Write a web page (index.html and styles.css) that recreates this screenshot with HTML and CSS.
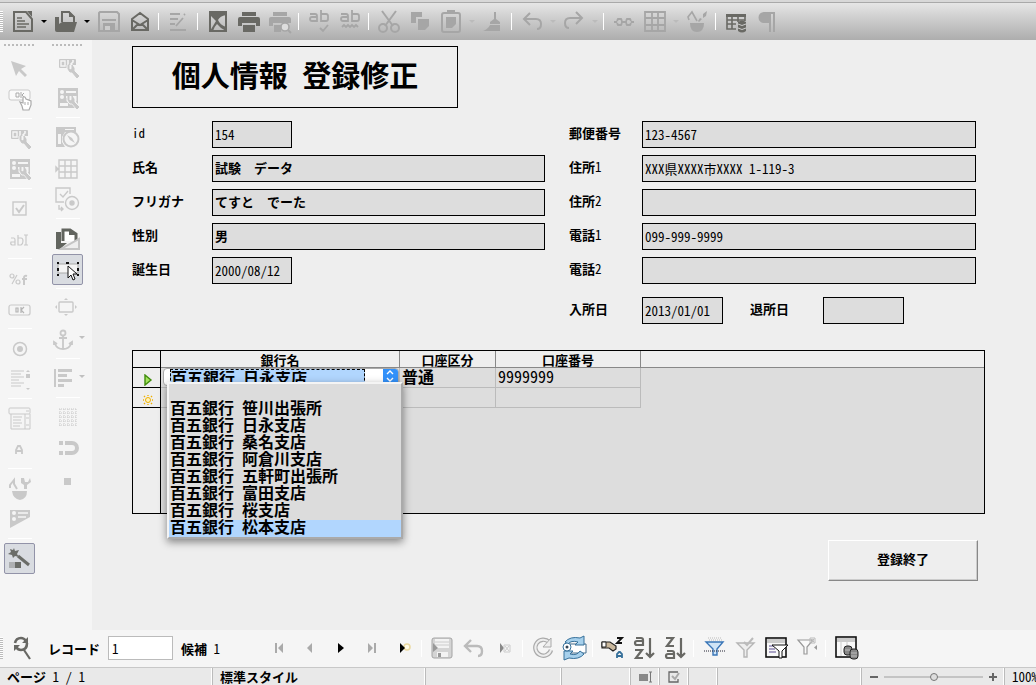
FILE: index.html
```html
<!DOCTYPE html>
<html lang="ja">
<head>
<meta charset="utf-8">
<meta name="viewport" content="width=device-width, initial-scale=1">
<title>個人情報 登録修正</title>
<link rel="stylesheet" href="styles.css">
</head>
<body>
<svg class="defs" aria-hidden="true">
  <symbol id="wrench" viewBox="0 0 24 24"><path d="M13 9v4l2 2h2l5 6M18 9v4l-2 3" fill="none" stroke="#f5f5f5" stroke-width="5"/><path d="M12 9v4l2 3h2l5 6 2-2-5-5v-3l-2-3v4l-2 1-1-1V9z" fill="currentColor" stroke="currentColor"/></symbol>
  <symbol id="control" viewBox="0 0 24 24"><rect x="3" y="3" width="17" height="9" rx="1" fill="currentColor"/><path d="M5 5h4v5H5z" fill="none" stroke="#f5f5f5" stroke-width="1.4"/><path d="M12 4v7M17 4v2l-2 2 2 2v1" fill="none" stroke="#f5f5f5" stroke-width="1.6"/><use href="#wrench"/></symbol>
  <symbol id="formprops" viewBox="0 0 24 24"><path d="M2 1h20v20H2z" fill="currentColor"/><path d="M10 4h10v2H10zM10 9h10v2H10zM4 16h8v3H4z" fill="#f5f5f5"/><circle cx="6" cy="5" r="2" fill="#f5f5f5"/><circle cx="6" cy="10" r="2" fill="#f5f5f5"/><use href="#wrench"/></symbol>
</svg>
<div class="app">
  <header class="toolbar" role="toolbar" aria-label="標準">
    <span class="grip"></span>
    <button class="tool" aria-label="新規"><svg viewBox="0 0 24 24"><path d="M15 2H3v19h18V9z" fill="none" stroke="currentColor" stroke-width="2"/><path d="M16 1h5v6z" fill="currentColor"/><path d="M6 8h5M6 11h8M6 14h12M6 17h9" stroke="currentColor" stroke-width="1.6"/></svg></button>
    <button class="drop" aria-label="新規メニュー"></button>
    <button class="tool" aria-label="開く"><svg viewBox="0 0 24 24"><path d="M8 12V2h7l5 5v5" fill="none" stroke="currentColor" stroke-width="2"/><path d="M15 1l6 6h-6z" fill="currentColor"/><path d="M1 7h4v7l3-2h15l-3 10H3q-2 0-2-2z" fill="currentColor"/></svg></button>
    <button class="drop" aria-label="開くメニュー"></button>
    <button class="tool" disabled aria-label="保存"><svg viewBox="0 0 24 24"><path d="M3 2h17l2 2v17H2V3z" fill="none" stroke="currentColor" stroke-width="2"/><path d="M5 10h14" stroke="currentColor" stroke-width="2"/><path d="M6 13h12v9H6z" fill="currentColor"/><path d="M8 16h5v4H8z" fill="#ccc"/></svg></button>
    <button class="tool" aria-label="メール"><svg viewBox="0 0 24 24"><path d="M4 9l8-6 8 6v11H4z M4 10l8 5 8-5M4 20l6-6M20 20l-6-6" fill="none" stroke="currentColor" stroke-width="2"/></svg></button>
    <span class="sep"></span>
    <button class="tool" disabled aria-label="編集"><svg viewBox="0 0 24 24"><path d="M3 4h10M3 9h8M3 14h5M3 20h16M9 16l7-8M17 5l1-1" fill="none" stroke="currentColor" stroke-width="1.8"/></svg></button>
    <span class="sep"></span>
    <button class="tool" aria-label="PDF"><svg viewBox="0 0 24 24"><path d="M4 2h16v19H4z" fill="none" stroke="currentColor" stroke-width="2"/><path d="M4 2h16v3q-6 1-8 5 2 5 8 7v4q-5-2-9-7-3 3-4 7H4l6-10-6-6z" fill="currentColor"/></svg></button>
    <button class="tool" aria-label="印刷"><svg viewBox="0 0 24 24"><path d="M5 2h14v4H5zM3 7h18q2 0 2 2v7h-4v-3H5v3H1V9q0-2 2-2zM6 15h12v7H6z" fill="currentColor"/></svg></button>
    <button class="tool" disabled aria-label="プレビュー"><svg viewBox="0 0 24 24"><path d="M5 2h14v4H5zM3 7h18q2 0 2 2v4H5v3H1V9q0-2 2-2zM6 15h7v7H6z" fill="currentColor"/><circle cx="17" cy="17" r="4" fill="#ddd" stroke="currentColor" stroke-width="1.6"/><path d="M20 20l3 3" stroke="currentColor" stroke-width="2"/></svg></button>
    <span class="sep"></span>
    <button class="tool" disabled aria-label="スペルチェック"><svg viewBox="0 0 24 24" fill="none" stroke="currentColor" stroke-width="1.8"><path d="M3 4h5q2 0 2 2v5H5q-2 0-2-2t2-2h5M14 0v11h5q2 0 2-2V6q0-2-2-2h-5M13 18l3 3 5-6"/></svg></button>
    <button class="tool" disabled aria-label="自動スペルチェック"><svg viewBox="0 0 24 24" fill="none" stroke="currentColor" stroke-width="1.8"><path d="M3 4h5q2 0 2 2v5H5q-2 0-2-2t2-2h5M14 0v11h5q2 0 2-2V6q0-2-2-2h-5M4 17l2-2 2 2 2-2 2 2 2-2 2 2 2-2 2 2"/></svg></button>
    <span class="sep"></span>
    <button class="tool" disabled aria-label="切り取り"><svg viewBox="0 0 24 24" fill="none" stroke="currentColor" stroke-width="2"><path d="M5 1l11 15M19 1L8 16"/><circle cx="6" cy="18" r="4"/><circle cx="18" cy="18" r="4"/></svg></button>
    <button class="tool" disabled aria-label="コピー"><svg viewBox="0 0 24 24" fill="currentColor"><path d="M3 2h11v5H8v6H3zM10 9h11v7l-4 4h-7z"/></svg></button>
    <button class="tool" disabled aria-label="貼り付け"><svg viewBox="0 0 24 24"><rect x="3" y="3" width="18" height="19" rx="2" fill="none" stroke="currentColor" stroke-width="2"/><path d="M8 0h8v4H8zM7 7h10v7l-4 4H7z" fill="currentColor"/></svg></button>
    <button class="drop faint" disabled aria-label="貼り付けメニュー"></button>
    <button class="tool" disabled aria-label="書式コピー"><svg viewBox="0 0 24 24" fill="currentColor"><path d="M13 2h2v7l4 3v2H9v-2l4-3zM9 15h10v6H2q5-2 7-6z"/></svg></button>
    <span class="sep"></span>
    <button class="tool" disabled aria-label="元に戻す"><svg viewBox="0 0 24 24" fill="none" stroke="currentColor" stroke-width="2"><path d="M10 3L4 9l6 6M4 9h12q5 0 5 5t-4 5"/></svg></button>
    <button class="drop faint" disabled aria-label="元に戻すメニュー"></button>
    <button class="tool" disabled aria-label="やり直し"><svg viewBox="0 0 24 24" fill="none" stroke="currentColor" stroke-width="2"><path d="M14 2l6 6-6 6M20 8H8q-5 0-5 5t4 5"/></svg></button>
    <button class="drop faint" disabled aria-label="やり直しメニュー"></button>
    <span class="sep"></span>
    <button class="tool" disabled aria-label="ハイパーリンク"><svg viewBox="0 0 24 24" fill="none" stroke="currentColor" stroke-width="1.8"><path d="M2 12h3M9 12h6M19 12h3M5 11l1-2h3l1 2M5 13l1 2h3l1-2M14 11l1-2h3l1 2M14 13l1 2h3l1-2"/></svg></button>
    <button class="tool" disabled aria-label="表"><svg viewBox="0 0 24 24" fill="none" stroke="currentColor" stroke-width="1.8"><path d="M2 2h20v19H2zM9 2v19M15 2v19M2 8h20M2 15h20"/></svg></button>
    <button class="drop faint" disabled aria-label="表メニュー"></button>
    <button class="tool" disabled aria-label="図形描画"><svg viewBox="0 0 24 24" fill="currentColor"><path d="M5 13h14q0 9-7 9t-7-9zM18 4l4-3-1 5-3 2zM15 8l2 1-3 3-1-1z"/><path d="M4 10L3 7l4-5 5 9" fill="none" stroke="currentColor" stroke-width="1.6"/></svg></button>
    <span class="sep"></span>
    <button class="tool" aria-label="データソース"><svg viewBox="0 0 24 24"><path d="M3 5h18v6M3 5v14h9M8 5v14M14 5v7M3 10h18M3 14h9" fill="none" stroke="currentColor" stroke-width="1.6"/><path d="M2 4h20v3H2z" fill="currentColor"/><path d="M14 12q4-3 8 0v9q-4 3-8 0z" fill="currentColor"/><path d="M14 14q4 3 8 0M14 18q4 3 8 0" fill="none" stroke="#ccc"/></svg></button>
    <button class="tool" disabled aria-label="編集記号"><svg viewBox="0 0 24 24" fill="currentColor"><path d="M9 2h11v20h-2V4h-2v18h-2V13H9a5 5 0 0 1 0-11z"/></svg></button>
  </header>

  <div class="body">
    <aside class="sidebar">
      <div class="rail" role="toolbar" aria-label="フォームコントロール">
        <span class="grip-h"></span>
        <button class="tool" aria-label="選択"><svg viewBox="0 0 24 24"><path d="M3 4l15 5-5 3 6 6-2 2-6-6-3 5z" fill="currentColor"/></svg></button>
        <button class="tool" aria-label="デザインモード"><svg viewBox="0 0 24 24"><rect x="1" y="2" width="21" height="10" rx="2" fill="#fafafa" stroke="currentColor"/><path d="M8 5h3v4H8zM13 4v6M16 5l-2 2 2 2" fill="none" stroke="#aaa"/><path d="M14 18l-2-4 3 1V9q2-1 3 2l5 2v4l-2 5h-6z" fill="#fff" stroke="#aaa" stroke-width="1.2"/><path d="M17 14v3M20 14v3" stroke="#aaa"/></svg></button>
        <span class="line"></span>
        <button class="tool" aria-label="コントロール"><svg viewBox="0 0 24 24"><use href="#control"/></svg></button>
        <button class="tool" aria-label="フォーム"><svg viewBox="0 0 24 24"><use href="#formprops"/></svg></button>
        <span class="line"></span>
        <button class="tool" aria-label="チェックボックス"><svg viewBox="0 0 24 24" fill="none" stroke="currentColor"><rect x="5" y="5" width="13" height="13" stroke-width="1.4"/><path d="M8 11l3 4 5-7" stroke-width="2"/></svg></button>
        <button class="tool" aria-label="テキストボックス"><svg viewBox="0 0 24 24" fill="none" stroke="currentColor" stroke-width="1.2"><path d="M3 10h3q1 0 1 2v5H4q-2-1-1-3h4M10 7v10h3q2-1 2-4t-2-3h-3M16 7h4M18 7v10M16 17h4"/></svg></button>
        <span class="line"></span>
        <button class="tool" aria-label="書式付きフィールド"><svg viewBox="0 0 24 24" fill="none" stroke="currentColor" stroke-width="1.2"><circle cx="4" cy="9" r="2"/><path d="M9 8l-5 9"/><circle cx="10" cy="15" r="2"/><path d="M19 9q-3-1-3 2v7M14 12h5" stroke-width="2"/></svg></button>
        <button class="tool" aria-label="ボタン"><svg viewBox="0 0 24 24" fill="none" stroke="currentColor"><rect x="1" y="7" width="21" height="10" rx="2" stroke-width="1.2"/><path d="M8 10h2v4H8zM13 9v6M16 9l-3 3 3 3" stroke="#b4b4b4" stroke-width="1.2"/></svg></button>
        <span class="line"></span>
        <button class="tool" aria-label="オプションボタン"><svg viewBox="0 0 24 24"><circle cx="12" cy="12" r="6.5" fill="none" stroke="currentColor" stroke-width="1.5"/><circle cx="12" cy="12" r="3" fill="currentColor"/></svg></button>
        <button class="tool" aria-label="リストボックス"><svg viewBox="0 0 24 24"><path d="M3 3h13M3 6h10M3 9h13M3 12h8M3 15h13M3 18h10" stroke="currentColor" stroke-width="1.2"/><path d="M20 2l2 2h-4zM18 6h4v4h-4zM18 20h4l-2 2z" fill="currentColor"/></svg></button>
        <span class="line"></span>
        <button class="tool" aria-label="コンボボックス"><svg viewBox="0 0 24 24" fill="none" stroke="currentColor"><rect x="1" y="1" width="21" height="6" rx="1"/><path d="M3 7v15h19V7M5 10h9M5 13h8M5 16h9M5 19h7M17 7v15M18 11h3M18 18h3M18 4h3"/></svg></button>
        <button class="tool" aria-label="ラベルフィールド"><svg viewBox="0 0 24 24"><path d="M8 16v-4l2-4h2l2 4v4M8 13h6" fill="none" stroke="currentColor" stroke-width="1.8"/></svg></button>
        <span class="line"></span>
        <button class="tool" aria-label="その他のコントロール"><svg viewBox="0 0 24 24" fill="currentColor"><path d="M4 14h15q0 8-7 9-7-1-8-9zM13 1v5l3 2v4h3V8l4-3-1-4-2 4h-3l-1-4z"/><path d="M2 11V8l4-5v4l3 5" fill="none" stroke="currentColor" stroke-width="2"/></svg></button>
        <button class="tool" aria-label="フォームデザイン"><svg viewBox="0 0 24 24"><path d="M2 2h20v7L2 20z" fill="currentColor"/><path d="M10 5h10M10 9h8" fill="none" stroke="#f5f5f5" stroke-width="1.4"/><circle cx="6" cy="5" r="2" fill="#f5f5f5"/><circle cx="6" cy="11" r="2" fill="#f5f5f5"/></svg></button>
        <span class="line"></span>
        <button class="tool on" aria-label="ウィザード" aria-pressed="true"><svg viewBox="0 0 24 24"><path d="M6 1l1 3 4-1-2 4 2 3-4-1-2 2-1-3-4-1 3-2-1-3 3 1z" fill="#6b6d68"/><path d="M10 9l11 9" stroke="#6b6d68" stroke-width="3"/><path d="M1 15h12v6H1z" fill="#aeb0b2"/><path d="M7 15h6v6H7z" fill="#6b6d68"/></svg></button>
      </div>
      <div class="rail second" role="toolbar" aria-label="フォームデザイン">
        <span class="grip-h"></span>
        <button class="tool" aria-label="コントロールのプロパティ"><svg viewBox="0 0 24 24"><use href="#control"/></svg></button>
        <button class="tool" aria-label="フォームのプロパティ"><svg viewBox="0 0 24 24"><use href="#formprops"/></svg></button>
        <span class="line"></span>
        <button class="tool" aria-label="フォームナビゲーター"><svg viewBox="0 0 24 24"><path d="M0 1h20v5H9l-3 5v5l3 5H0z" fill="currentColor"/><path d="M2 8h3v10H2zM9 3h9v1H9z" fill="#f5f5f5"/><circle cx="15" cy="13" r="7.5" fill="#f5f5f5" stroke="currentColor" stroke-width="2"/><path d="M11 9l5 3 3 5-5-3z" fill="currentColor"/></svg></button>
        <button class="tool" aria-label="テーブルコントロール"><svg viewBox="0 0 24 24" fill="none" stroke="currentColor" stroke-width="1.4"><path d="M3 3h18v18H3zM9 3v18M15 3v18M3 9h18M3 15h18M0 10v4l2-2z"/></svg></button>
        <button class="tool" aria-label="コントロールの置換"><svg viewBox="0 0 24 24" fill="none" stroke="currentColor" stroke-width="1.4"><path d="M8 14H0V0h14v6M4 6l3 3 5-6M3 17v4h4M5 19l2 2-2 2"/><circle cx="16" cy="15" r="6.5"/><circle cx="16" cy="15" r="2" fill="currentColor"/></svg></button>
        <span class="line"></span>
        <button class="tool dark" aria-label="デザインモードで開く"><svg viewBox="0 0 24 24"><path d="M7 14V3h7l6 4v7" fill="#fff" stroke="currentColor" stroke-width="3"/><path d="M13 2l7 6h-7zM0 5h5v11h6l-7 6H0z" fill="currentColor"/><path d="M23 12v10H5z" fill="#eee" stroke="#c4c4c4" stroke-width="2"/></svg></button>
        <button class="tool on" aria-label="位置とサイズ" aria-pressed="true"><svg viewBox="0 0 24 24"><rect x="2" y="6" width="20" height="9" fill="#f4f4f4" stroke="#aaa"/><path d="M1 4h2v2H1zM10 4h3v2h-3zM21 4h2v2h-2zM1 10h2v3H1zM21 10h2v3h-2zM1 16h2v2H1zM21 16h2v2h-2z" fill="#111"/><path d="M12 8v12l3-3 2 5 2-1-2-5h4z" fill="#fff" stroke="#111"/></svg></button>
        <span class="line"></span>
        <button class="tool" aria-label="配置"><svg viewBox="0 0 24 24"><rect x="3" y="5" width="14" height="10" rx="1" fill="none" stroke="currentColor" stroke-width="1.4"/><path d="M10 1l2 2H8zM10 19l2-2H8zM-1 10l2-2v4zM21 10l-2-2v4z" fill="currentColor"/></svg></button>
        <button class="tool menu" aria-label="アンカー"><svg viewBox="0 0 24 24" fill="none" stroke="currentColor" stroke-width="1.8"><circle cx="7" cy="5" r="2.5"/><path d="M7 8v13M3 10h8M-1 16q2 5 8 5 6 0 8-5M-2 17v-3l3 2M16 17v-3l-3 2"/></svg></button>
        <span class="line"></span>
        <button class="tool menu" aria-label="整列"><svg viewBox="0 0 24 24" fill="currentColor"><path d="M-2 2h2v18h-2zM2 2h14v3H2zM2 7h9v3H2zM2 12h14v3H2zM2 17h6v3H2z"/></svg></button>
        <span class="line"></span>
        <button class="tool" aria-label="グリッド"><svg viewBox="0 0 24 24"><path d="M3 3h18M3 7h18M3 11h18M3 15h18M3 19h18" stroke="currentColor" stroke-dasharray="1 1"/><path d="M4 3v17M8 3v17M12 3v17M16 3v17M20 3v17" stroke="currentColor" stroke-dasharray="1 1"/></svg></button>
        <button class="tool" aria-label="グリッドに合わせる"><svg viewBox="0 0 24 24"><path d="M9 6h7a5 5 0 0 1 0 10H9" fill="none" stroke="currentColor" stroke-width="4"/><path d="M3 4h4v4H3zM3 14h4v4H3z" fill="currentColor"/></svg></button>
        <button class="tool" aria-label="ガイド"><svg viewBox="0 0 24 24"><path d="M8 10h7v7H8z" fill="currentColor"/></svg></button>
      </div>
    </aside>

    <main class="page">
      <h1 class="title">個人情報 登録修正</h1>
      <form class="form">
        <div class="fields">
          <div class="row"><label for="id"><span class="num">id</span></label><input id="id" class="short" value="154"></div>
          <div class="row"><label for="name">氏名</label><input id="name" class="text" value="試験　データ"></div>
          <div class="row"><label for="kana">フリガナ</label><input id="kana" class="text" value="てすと　でーた"></div>
          <div class="row"><label for="sex">性別</label><input id="sex" class="text" value="男"></div>
          <div class="row"><label for="birth">誕生日</label><input id="birth" class="short" value="2000/08/12"></div>
        </div>
        <div class="fields right">
          <div class="row"><label for="zip">郵便番号</label><input id="zip" value="123-4567"></div>
          <div class="row"><label for="addr1">住所<span class="num">1</span></label><input id="addr1" value="XXX県XXXX市XXXX 1-119-3"></div>
          <div class="row"><label for="addr2">住所<span class="num">2</span></label><input id="addr2"></div>
          <div class="row"><label for="tel1">電話<span class="num">1</span></label><input id="tel1" value="099-999-9999"></div>
          <div class="row"><label for="tel2">電話<span class="num">2</span></label><input id="tel2"></div>
          <div class="row dates"><label for="in">入所日</label><input id="in" class="short" value="2013/01/01"><label for="out" class="second">退所日</label><input id="out" class="short"></div>
        </div>
      </form>

      <section class="sheet">
        <table class="accounts">
          <thead>
            <tr><th class="mark"></th><th class="bank">銀行名</th><th class="kind">口座区分</th><th class="number">口座番号</th><th></th></tr>
          </thead>
          <tbody>
            <tr>
              <td class="mark"><svg viewBox="0 0 12 12"><path d="M3 1l6 5-6 5z" fill="#a4e45c" stroke="#3f8c0c" stroke-width="1.4"/></svg></td>
              <td class="bank">
                <div class="combo">
                  <select aria-label="銀行名"><option>百五銀行 日永支店</option></select>
                  <span class="stepper"><svg viewBox="0 0 14 14"><path d="M4 5l3-3 3 3M4 9l3 3 3-3" fill="none" stroke="#fff" stroke-width="1.4"/></svg></span>
                  <ul class="list" role="listbox" aria-label="銀行名の候補">
                    <li role="option"></li>
                    <li role="option">百五銀行 笹川出張所</li>
                    <li role="option">百五銀行 日永支店</li>
                    <li role="option">百五銀行 桑名支店</li>
                    <li role="option">百五銀行 阿倉川支店</li>
                    <li role="option">百五銀行 五軒町出張所</li>
                    <li role="option">百五銀行 富田支店</li>
                    <li role="option">百五銀行 桜支店</li>
                    <li role="option" class="active" aria-selected="true">百五銀行 松本支店</li>
                  </ul>
                </div>
              </td>
              <td class="strong">普通</td><td>9999999</td><td class="rest"></td>
            </tr>
            <tr>
              <td class="mark"><svg viewBox="0 0 12 12"><circle cx="6" cy="6" r="2.5" fill="#fff4c0" stroke="#f0b000"/><path d="M6 1v1M6 10v1M1 6h1M10 6h1M2 2l1 1M9 9l1 1M10 2L9 3M3 9l-1 1" stroke="#f0b000" stroke-width="1.4"/></svg></td>
              <td></td><td></td><td></td><td class="rest"></td>
            </tr>
            <tr class="filler"><td class="mark"></td><td colspan="4" class="rest"></td></tr>
          </tbody>
        </table>
      </section>

      <button class="finish">登録終了</button>
    </main>
  </div>

  <nav class="navbar" aria-label="レコード移動">
    <span class="grip"></span>
    <div class="record">
      <button class="tool dark" aria-label="レコード検索"><svg viewBox="0 0 24 24" fill="none" stroke="currentColor"><path d="M5 7q1-5 6-5 3 0 5 3M17 7q0 7-6 7-3 0-5-3" stroke-width="2.6"/><path d="M18 1v6h-6zM4 15V9h6z" fill="currentColor" stroke="none"/><path d="M14 14l6 9" stroke-width="2.2"/></svg></button>
      <label for="rec">レコード</label><input id="rec" value="1"><span class="count">候補 <span class="num">1</span></span>
    </div>
    <button class="tool gray" aria-label="最初"><svg viewBox="0 0 24 24"><path d="M8 7h2v10H8zM16 7v10l-5-5z" fill="currentColor"/></svg></button>
    <button class="tool gray" aria-label="前"><svg viewBox="0 0 24 24"><path d="M14 7v10l-5-5z" fill="currentColor"/></svg></button>
    <button class="tool black" aria-label="次"><svg viewBox="0 0 24 24"><path d="M9 7v10l6-5z" fill="currentColor"/></svg></button>
    <button class="tool gray" aria-label="最後"><svg viewBox="0 0 24 24"><path d="M8 7v10l5-5zM14 7h2v10h-2z" fill="currentColor"/></svg></button>
    <button class="tool black" aria-label="新しいレコード"><svg viewBox="0 0 24 24"><circle cx="16" cy="11" r="3" fill="#fffbe8" stroke="#ead9a0" stroke-width="1.6"/><path d="M9 7v10l5-5z" fill="currentColor"/></svg></button>
    <span class="sep"></span>
    <button class="tool gray" aria-label="レコードの保存"><svg viewBox="0 0 24 24"><rect x="2" y="2" width="20" height="20" rx="2" fill="#d4d4d4" stroke="#a4a4a4"/><path d="M5 3h14v9H5zM7 16h11v5H7z" fill="#f3f3f3"/><path d="M5 6h14M5 9h14" stroke="#ccc"/><path d="M3 7l5 5-5 4zM8 17h3v4H8z" fill="#999"/></svg></button>
    <button class="tool gray" aria-label="元に戻す"><svg viewBox="0 0 24 24" fill="none" stroke="#bbb" stroke-width="2.4"><path d="M10 4L4 10l6 6M4 10h12q5 0 5 5t-4 5"/></svg></button>
    <button class="tool gray" aria-label="削除"><svg viewBox="0 0 24 24"><path d="M8 7v10l4-5z" fill="#888"/><path d="M12 9h6v7h-6zM13 10l4 5M17 10l-4 5" fill="none" stroke="#ccc"/></svg></button>
    <span class="sep"></span>
    <button class="tool gray" aria-label="更新"><svg viewBox="0 0 24 24" fill="none"><path d="M18 6a8 8 0 1 0 2 8" stroke="#aaa" stroke-width="4.4"/><path d="M18 6a8 8 0 1 0 2 8" stroke="#eee" stroke-width="2"/><path d="M20 2v9h-8z" fill="#eee" stroke="#aaa"/></svg></button>
    <button class="tool" aria-label="コントロールの更新"><svg viewBox="0 0 24 24"><path d="M7 8h17v9H7z" fill="#fff" stroke="#456d8c"/><path d="M3 6q5-6 15-4l4-2v9h-9l3-3Q9 4 6 8z" fill="#a6d0ec" stroke="#36709a"/><path d="M22 18q-5 6-15 4l-5 2v-9h9l-3 3q7 2 10-3z" fill="#a6d0ec" stroke="#36709a"/><circle cx="5" cy="11" r="4" fill="#fff" stroke="#36709a"/><circle cx="5" cy="11" r="1.5" fill="#345"/></svg></button>
    <span class="sep"></span>
    <button class="tool" aria-label="並べ替え"><svg viewBox="0 0 24 24"><path d="M1 6h8l6 4v3l-3 2-4-3H1z" fill="#c9b79c" stroke="#222" stroke-width="1.2"/><path d="M1 6h4v5H1z" fill="#fff" stroke="#222"/><path d="M16 2h5l-5 5h5" fill="none" stroke="#111" stroke-width="1.8"/><path d="M16 22v-4l2-2h1l2 2v4M16 20h5" fill="none" stroke="#36709a" stroke-width="1.8"/></svg></button>
    <button class="tool dark" aria-label="昇順"><svg viewBox="0 0 24 24" fill="none" stroke="currentColor" stroke-width="2.2"><path d="M4 2h5q2 0 2 2v5H5q-2 0-2-2t2-2h6M3 14h7l-6 8h7M18 2v19M14 17l4 4 4-4"/></svg></button>
    <button class="tool dark" aria-label="降順"><svg viewBox="0 0 24 24" fill="none" stroke="currentColor" stroke-width="2.2"><path d="M3 2h7l-6 8h7M4 15h5q2 0 2 2v5H5q-2 0-2-2t2-2h6M18 2v19M14 17l4 4 4-4"/></svg></button>
    <span class="sep"></span>
    <button class="tool" aria-label="オートフィルター"><svg viewBox="0 0 24 24"><path d="M6 2h13M7 4h13" stroke="#bbb" stroke-dasharray="1 1"/><path d="M4 6h17l-6 7v6h-4v-6z" fill="#cfe4f6" stroke="#3975b7" stroke-width="1.4"/><path d="M2 15h21" stroke="#223" stroke-dasharray="1 1"/></svg></button>
    <button class="tool gray" aria-label="フィルターの適用"><svg viewBox="0 0 24 24"><path d="M4 7h17l-7 7v7h-3v-7z" fill="#eee" stroke="#b5b5b5" stroke-width="1.4"/><path d="M11 6l3 3 6-7" fill="none" stroke="#bbb" stroke-width="2"/></svg></button>
    <button class="tool" aria-label="フォームフィルター"><svg viewBox="0 0 24 24"><rect x="2" y="2" width="20" height="19" fill="#f8f8f8" stroke="#111" stroke-width="1.6"/><path d="M3 3h18v4H3z" fill="#ccc"/><path d="M5 10h5M5 13h6M5 16h7" stroke="#5b4d91"/><path d="M8 9h16l-6 6v7h-3v-7z" fill="#fff" stroke="#111"/></svg></button>
    <button class="tool gray" aria-label="フィルターの解除"><svg viewBox="0 0 24 24"><path d="M3 4h15l-6 7v7h-3v-7z" fill="#fafafa" stroke="#999" stroke-width="1.2"/><path d="M15 2h5v5h-5zM16 3l3 3M19 3l-3 3" fill="none" stroke="#bbb"/><path d="M22 9v5l-3-2.500z" fill="#999"/></svg></button>
    <span class="sep"></span>
    <button class="tool" aria-label="データソース表示"><svg viewBox="0 0 24 24"><rect x="2" y="1" width="20" height="20" fill="#fafafa" stroke="#111" stroke-width="1.6"/><path d="M3 2h18v4H3z" fill="#ccc"/><path d="M7 2v18M13 2v18" stroke="#ccc"/><rect x="10" y="10" width="8" height="9" rx="3" fill="#888" stroke="#222"/><rect x="16" y="13" width="8" height="10" rx="3" fill="#888" stroke="#222"/><path d="M11 14h5M17 17h6M17 20h6" stroke="#bbb"/></svg></button>
  </nav>

  <footer class="status">
    <span class="cell pages">ページ&nbsp;<span class="num">1 / 1</span></span>
    <span class="cell style">標準スタイル</span>
    <span class="cell lang"></span>
    <span class="cell mode"></span>
    <span class="cell icon"><svg viewBox="0 0 14 12"><path d="M1 3h9v7H1z" fill="#888"/><path d="M11 1h3M12.500 1v10M11 11h3" stroke="#777" fill="none"/></svg></span>
    <span class="cell icon"><svg viewBox="0 0 14 12"><path d="M11 1H2v10h9V8" fill="none" stroke="#666" stroke-width="1.300"/><path d="M5 5l3 3 4-6" fill="none" stroke="#aaa" stroke-width="2"/></svg></span>
    <span class="cell icon"></span>
    <span class="cell wide"></span>
    <span class="cell zoom"><button aria-label="縮小" class="minus"></button><input type="range" min="0" max="100" value="50" aria-label="ズーム"><button aria-label="拡大" class="plus"></button></span>
    <span class="cell percent">100%</span>
  </footer>
</div>
</body>
</html>
```
FILE: styles.css
```css
* { box-sizing: border-box; }

body {
  margin: 0;
  background: #eee;
  color: #000;
  font: 500 13px/17px "Noto Sans Mono CJK JP", "Noto Sans CJK JP", monospace;
}

button, input, select {
  margin: 0;
  padding: 0;
  border: 0;
  border-radius: 0;
  background: none;
  color: inherit;
  font: inherit;
}

.defs { display: none; }
.num { font-weight: 500; }

.app {
  display: flex;
  flex-direction: column;
  min-height: 100vh;
  overflow: hidden;
}

/* Shared toolbar parts */
.tool {
  display: flex;
  flex: none;
  align-items: center;
  justify-content: center;
  width: 31px;
  height: 31px;
  color: #696964;
}
.tool svg { width: 24px; height: 24px; overflow: visible; }
.tool:disabled { color: #a6a6a6; }
.tool.dark { color: #686864; }
.tool.gray { color: #aaa; }
.tool.black { color: #000; }
.tool.on {
  border: 1px solid #9293a8;
  border-radius: 2px;
  background: #d9dce1;
}
.sep {
  flex: none;
  width: 1px;
  height: 17px;
  margin: 0 4px 0 3px;
  background: #fff;
}
.grip {
  flex: none;
  width: 3px;
  height: 22px;
  margin-right: 4px;
  background: repeating-linear-gradient(#fff 0 1px, #bbb 1px 2px);
}

.toolbar {
  display: flex;
  align-items: center;
  height: 40px;
  padding-top: 3px;
  background: linear-gradient(#d8d8d8 0 2px, #a9a9a9 2px 3px, #e6e6e6 3px, #cbcbcb 50%, #adadad);
}
.drop {
  display: flex;
  flex: none;
  justify-content: center;
  width: 12px;
}
.drop::after {
  content: "";
  border: 3px solid transparent;
  border-top-color: #000;
  border-bottom: 0;
}
.drop.faint { width: 11px; }
.drop.faint::after { border-top-color: #bbb; }

.body { display: flex; flex: 1; }

.sidebar {
  display: flex;
  flex: none;
  gap: 17px;
  width: 92px;
  padding: 4px 4px 0;
  background: #f5f5f5;
}
.rail { width: 31px; }
.rail.second .grip-h { margin-bottom: 6px; }
.rail .tool { position: relative; color: #c9c9c9; }
.rail .tool.dark { color: #62655f; }
.grip-h {
  display: block;
  height: 2px;
  margin: 0 0 7px;
  background: repeating-linear-gradient(90deg, #bbb 0 2px, transparent 2px 4px);
}
.line {
  display: block;
  width: 24px;
  height: 1px;
  margin: 3px auto 4px;
  background: #fff;
}
.menu::after {
  content: "";
  position: absolute;
  top: 12px;
  right: -2px;
  border: 3px solid transparent;
  border-top-color: #c0c0c0;
  border-bottom: 0;
}

/* Form page */
.page {
  flex: 1;
  min-width: 0;
  padding: 6px 51px 49px 40px;
}
.title {
  width: 326px;
  height: 62px;
  margin: 0 0 13px;
  border: 1px solid #000;
  font-size: 29px;
  font-weight: 700;
  line-height: 54px;
  text-align: center;
}
.form {
  display: flex;
  gap: 24px;
  margin-right: 9px;
}
.fields {
  display: flex;
  flex: 0 1 413px;
  flex-direction: column;
  gap: 7px;
  min-width: 0;
}
.fields.right { flex: 1 1 0; }
.row {
  display: flex;
  align-items: center;
}
.row label {
  flex: none;
  width: 80px;
  padding-bottom: 4px;
  font-weight: 700;
}
.right .row label { width: 73px; }
.row input {
  flex: 1;
  min-width: 0;
  height: 27px;
  padding: 0 2px;
  border: 1px solid #000;
  background: #ddd;
}
.row input.text { padding-bottom: 2px; font-weight: 700; }
.row input.short { flex: 0 1 80px; }
.right .row input.short { flex-basis: 81px; }
.dates { margin-top: 6px; }
.dates .second { margin-left: 27px; }

.sheet {
  margin-top: 26px;
  border: 1px solid #000;
  background: #ddd;
}
.accounts {
  width: 100%;
  border-collapse: separate;
  border-spacing: 0;
  table-layout: fixed;
}
.accounts th {
  height: 17px;
  padding: 0;
  border-right: 1px solid #888;
  border-bottom: 1px solid #888;
  background: #eee;
  font-weight: 700;
  line-height: 13px;
}
.accounts th:last-child { border-right: 0; }
.accounts td {
  height: 20px;
  padding: 0 2px;
  border-right: 1px solid #bbb;
  border-bottom: 1px solid #bbb;
  font-size: 16px;
  line-height: 17px;
  vertical-align: top;
}
.accounts th.mark, .accounts td.mark {
  width: 28px;
  border-color: #000;
  background: #eee;
}
.mark svg { display: block; width: 12px; height: 12px; margin: 6px 0 0 7px; }
.accounts td.mark { height: 20px; padding: 0 2px; line-height: 0; }
.accounts th.bank { width: 239px; }
.accounts th.kind { width: 96px; }
.accounts th.number { width: 145px; }
.accounts td.bank { padding: 0; }
.accounts td.rest { border: 0; }
.accounts .strong { font-weight: 700; }
.accounts .filler td { height: 105px; border-bottom: 0; }

.combo {
  position: relative;
  display: flex;
  align-items: center;
  height: 18px;
  margin-left: 2px;
  padding-left: 6px;
  border: 1px solid #aaa;
  border-radius: 4px;
  background: #fff;
}
.combo select {
  flex: none;
  width: 195px;
  height: 16px;
  border: 1px dashed #000;
  background: #b1d6fe;
  appearance: none;
  font-size: 16px;
  font-weight: 700;
  line-height: 13px;
}
.stepper {
  display: flex;
  width: 15px;
  height: 16px;
  margin-left: auto;
  border-radius: 0 3px 3px 0;
  background: #3291fa;
}
.stepper svg { width: 14px; height: 14px; }
.list {
  position: absolute;
  z-index: 2;
  top: 13px;
  left: 3px;
  width: 236px;
  margin: 0;
  padding: 0;
  border: 2px solid;
  border-color: #f4f4f4 #aaa #aaa #f4f4f4;
  background: #dcdcdc;
  box-shadow: 0 3px 8px rgb(0 0 0 / 45%);
  font-weight: 700;
  list-style: none;
}
.list li {
  height: 17px;
  padding-left: 1px;
  line-height: 13px;
  white-space: nowrap;
}
.list .active { background: #b1d6fe; }

.finish {
  display: block;
  width: 150px;
  height: 41px;
  margin: 26px 7px 0 auto;
  padding-bottom: 4px;
  border: 1px solid;
  border-color: #fff #888 #888 #fff;
  box-shadow: inset -1px -1px #ccc;
  font-weight: 700;
}

/* Record navigation */
.navbar {
  display: flex;
  align-items: center;
  height: 37px;
  padding-bottom: 1px;
  background: #f5f5f5;
}
.navbar .grip { margin-right: 3px; }
.record {
  display: flex;
  flex: none;
  align-items: center;
  width: 257px;
}
.record label { width: 60px; margin-left: 11px; font-weight: 700; }
.record input {
  width: 65px;
  height: 24px;
  padding: 0 3px;
  border: 1px solid #bbb;
  background: #fff;
}
.count { margin-left: 8px; font-weight: 700; }

.status {
  display: flex;
  height: 18px;
  border-top: 1px solid #c8c8c8;
  background: #e9e9e9;
  font-weight: 700;
  overflow: hidden;
}
.cell {
  flex: none;
  display: flex;
  align-items: center;
  padding-left: 7px;
  border-right: 1px solid #bbb;
  box-shadow: inset -1px 0 #fff;
  white-space: nowrap;
}
.cell svg { width: 14px; height: 12px; }
.pages { width: 213px; }
.style { width: 213px; }
.lang { width: 136px; }
.mode { width: 69px; }
.icon { width: 29px; }
.wide { flex: 1; }
.zoom { gap: 6px; width: 143px; padding: 0 7px 0 8px; }
.zoom button { flex: none; width: 8px; height: 8px; }
.minus { background: linear-gradient(#666, #666) center / 8px 2px no-repeat; }
.plus { background: linear-gradient(#666, #666) center / 8px 2px no-repeat, linear-gradient(#666, #666) center / 2px 8px no-repeat; }
.zoom input {
  flex: 1;
  min-width: 0;
  height: 10px;
  appearance: none;
  background: linear-gradient(#c4c4c4, #c4c4c4) center / 100% 2px no-repeat;
}
.zoom input::-webkit-slider-thumb {
  appearance: none;
  width: 8px;
  height: 8px;
  border: 1px solid #777;
  border-radius: 50%;
  background: #ddd;
}
.percent { width: 31px; border: 0; box-shadow: none; font-weight: 500; }
```
